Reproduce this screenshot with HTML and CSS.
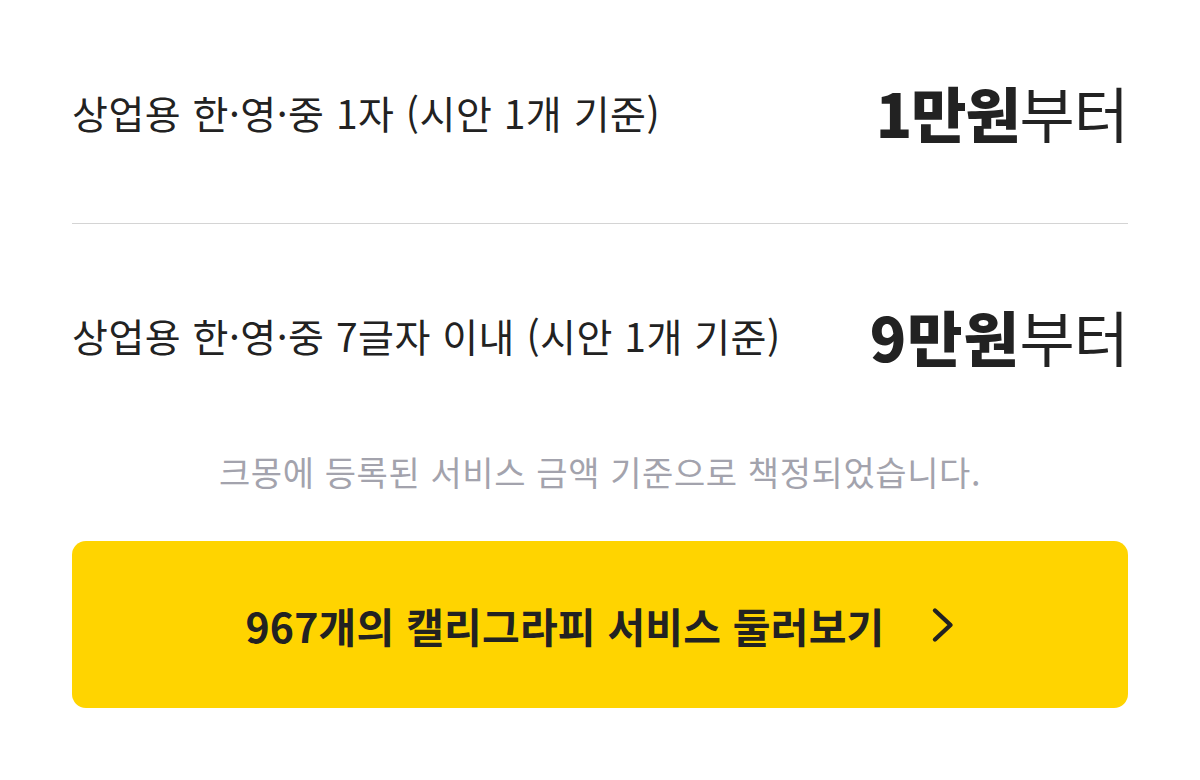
FILE: index.html
```html
<!DOCTYPE html>
<html lang="ko">
<head>
  <meta charset="UTF-8">
  <meta name="viewport" content="width=device-width, initial-scale=1.0">
  <title>캘리그라피 가격 안내</title>
  <link rel="stylesheet" href="styles.css">
</head>
<body>
  <div class="price-guide">
    <div class="price-row">
      <span class="price-label">상업용 한·영·중 1자 (시안 1개 기준)</span>
      <span class="price-value"><b>1만원</b>부터</span>
    </div>
    <div class="price-row">
      <span class="price-label">상업용 한·영·중 7글자 이내 (시안 1개 기준)</span>
      <span class="price-value"><b class="wide-digit">9만원</b>부터</span>
    </div>

    <p class="price-note">크몽에 등록된 서비스 금액 기준으로 책정되었습니다.</p>

    <a class="browse-btn" href="#">
      <span>967개의 캘리그라피 서비스 둘러보기</span>
      <svg class="chevron" width="24" height="36" viewBox="0 0 24 36">
        <path d="M4 3.5 L19.5 18 L4 32.5" fill="none" stroke="#222" stroke-width="4.4" stroke-linecap="round" stroke-linejoin="round"/>
      </svg>
    </a>
  </div>
</body>
</html>
```

FILE: styles.css
```css
body {
  margin: 0;
  background: #ffffff;
  color: #222222;
  font-family: "Noto Sans CJK KR", "Noto Sans", sans-serif;
}
.price-guide {
  padding: 0 72px;
}
.price-row {
  display: flex;
  justify-content: space-between;
  align-items: center;
  height: 222px;
}
.price-row:first-child {
  height: 224px;
  border-bottom: 1px solid #d4d4d4;
  box-sizing: border-box;
}
.price-label {
  font-size: 39px;
  letter-spacing: 0.5px;
}
.price-value {
  font-size: 60px;
  letter-spacing: -1px;
}
.price-value b {
  font-weight: 800;
}
.price-value .wide-digit {
  letter-spacing: 1px;
}
.price-note {
  margin: 2px 0 0;
  line-height: 48px;
  text-align: center;
  font-size: 34px;
  color: #a3a3ad;
  letter-spacing: 0.6px;
}
.browse-btn {
  display: flex;
  justify-content: center;
  align-items: center;
  gap: 46px;
  height: 167px;
  margin-top: 45px;
  background: #ffd400;
  border-radius: 14px;
  color: #222222;
  text-decoration: none;
  font-size: 41px;
  font-weight: 700;
  letter-spacing: 0.2px;
}
```
